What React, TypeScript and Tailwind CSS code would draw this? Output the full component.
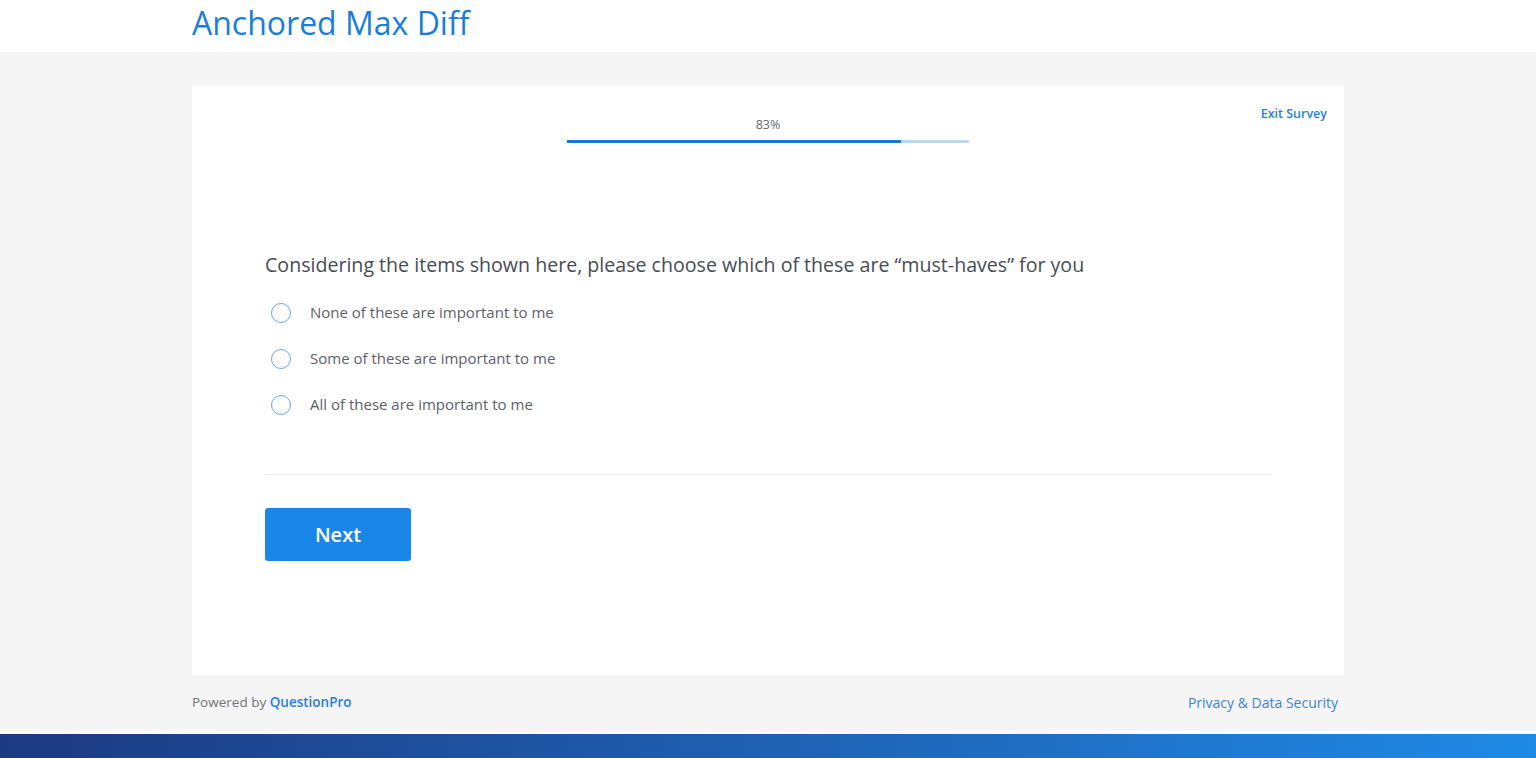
import React from "react";

const font = { fontFamily: '"Open Sans", "Noto Sans", Arial, sans-serif' };

const options = [
  "None of these are important to me",
  "Some of these are important to me",
  "All of these are important to me",
];

export default function App() {
  return (
    <div className="flex h-[758px] w-full flex-col bg-[#f5f5f6] overflow-hidden" style={font}>
      {/* Header */}
      <header className="h-[52px] bg-white pl-[192px] shrink-0">
        <h1 className="pt-[3px] text-[32px] leading-[40px] font-medium text-[#1a7fd9]">
          Anchored Max Diff
        </h1>
      </header>

      {/* Survey card */}
      <main className="flex-1 px-[192px] pt-[34px]">
        <div className="relative h-[589px] bg-white">
          <a className="absolute right-[17px] top-[19px] text-[12.5px] font-semibold text-[#2a7fd4]">
            Exit Survey
          </a>

          <div className="flex flex-col items-center pt-[31px]">
            <span className="text-[12.5px] leading-[16px] text-[#666a70]">83%</span>
            <div className="mt-[7px] h-[3px] w-[402px] bg-[#bcd7f2]">
              <div className="h-full bg-[#1776d8]" style={{ width: "83%" }} />
            </div>
          </div>

          <div className="pl-[73px] pr-[72px] pt-[109px]">
            <p className="text-[19.6px] leading-[26px] text-[#474c54]">
              Considering the items shown here, please choose which of these are “must-haves” for you
            </p>

            <div className="mt-[22px] flex flex-col gap-[21px]">
              {options.map((o) => (
                <label key={o} className="flex items-center h-[25px]">
                  <span className="ml-[6px] h-[20px] w-[20px] rounded-full border-[1.5px] border-[#6ea2dc]" />
                  <span className="ml-[19px] text-[15px] text-[#5d6168]">{o}</span>
                </label>
              ))}
            </div>

            <div className="mt-[57px] h-px bg-[#ececec]" />

            <button className="mt-[33px] h-[53px] w-[146px] rounded-[3px] bg-[#1a87e8] text-[20px] font-semibold text-white">
              Next
            </button>
          </div>
        </div>

        {/* Footer links */}
        <div className="mt-[17px] flex items-center justify-between pr-[6px]">
          <span className="text-[13.5px] text-[#70747a]">
            Powered by <span className="font-semibold text-[#2a7fd4]">QuestionPro</span>
          </span>
          <span className="text-[14px] text-[#3a86d4]">Privacy &amp; Data Security</span>
        </div>
      </main>

      {/* Bottom band */}
      <div className="h-[3px] bg-white shrink-0" />
      <div className="h-[24px] shrink-0 bg-gradient-to-r from-[#1b3a82] to-[#1e8ae6]" />
    </div>
  );
}
